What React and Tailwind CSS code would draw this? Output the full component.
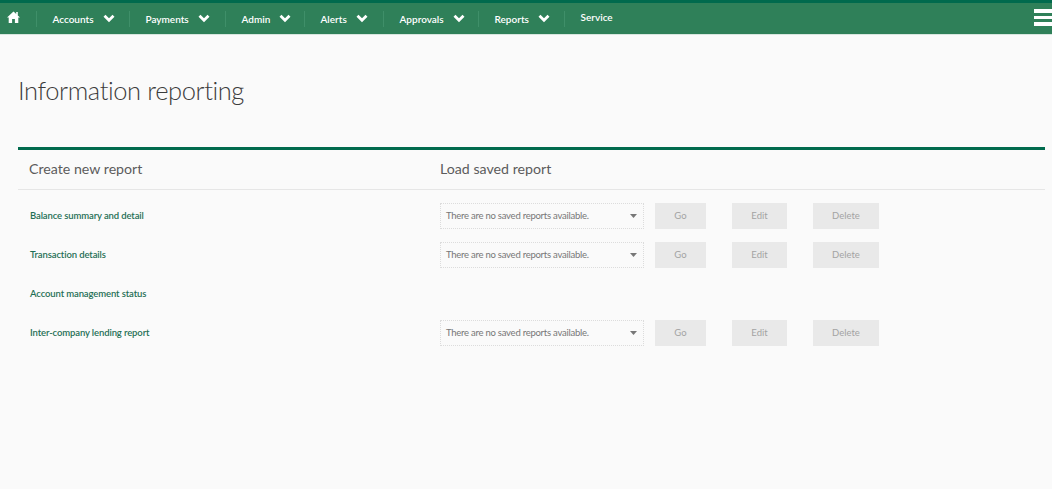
const NAV = [
  { label: "Accounts", cls: "w-[93px]" },
  { label: "Payments", cls: "w-[96px]" },
  { label: "Admin", cls: "w-[79px]" },
  { label: "Alerts", cls: "w-[79px]" },
  { label: "Approvals", cls: "w-[95px]" },
  { label: "Reports", cls: "w-[86px]" },
];

function Chevron() {
  return (
    <svg width="12" height="9" viewBox="0 0 12 9" fill="none" className="block">
      <path d="M1.5 1.8 L6 6.3 L10.5 1.8" stroke="#fff" strokeWidth="2.8" />
    </svg>
  );
}

function ReportRow({ name, saved = true }) {
  return (
    <div className="flex h-[39px] items-center">
      <div className="w-[422px] pl-[12px] pt-[1px] text-[9.5px] font-semibold tracking-[-0.12px] text-[#1f6f55]">{name}</div>
      {saved && (
        <div className="flex items-center text-[9.5px] text-[#a3a3a3]">
          <div className="flex h-[26px] w-[204px] items-center justify-between border border-dotted border-[#dcdcdc] pl-[5px] pr-[6px] tracking-[-0.25px] text-[#777777]">
            <span className="pt-[1px]">There are no saved reports available.</span>
            <svg width="7" height="4" viewBox="0 0 7 4"><path d="M0 0H7L3.5 4Z" fill="#777777" /></svg>
          </div>
          <div className="ml-[11px] flex h-[26px] w-[51px] items-center justify-center bg-[#e9e9e9] pt-[1px]">Go</div>
          <div className="ml-[26px] flex h-[26px] w-[55px] items-center justify-center bg-[#e9e9e9] pt-[1px]">Edit</div>
          <div className="ml-[26px] flex h-[26px] w-[66px] items-center justify-center bg-[#e9e9e9] pt-[1px]">Delete</div>
        </div>
      )}
    </div>
  );
}

export default function App() {
  return (
    <div className="h-[489px] w-[1052px] overflow-hidden bg-[#fafafa] font-['Lato',sans-serif]">
      <header className="flex h-[35px] items-center border-t-[3px] border-b border-t-[#006a4d] border-b-[#d8e6df] bg-[#2f8059] text-[10px] font-semibold text-white">
        <div className="flex w-[36px] justify-start pb-[3px] pl-[7px]">
          <svg width="13" height="12" viewBox="0 0 13 12" fill="#fff">
            <path d="M6.5 0.5 L9.2 3 V1 H10.8 V4.4 L13 6.5 H11.3 V12 H7.9 V8 H5.1 V12 H1.7 V6.5 H0 Z" />
          </svg>
        </div>
        {NAV.map((item) => (
          <div key={item.label} className={`flex h-[16px] items-center border-l border-[#3f8f69] pl-[15.5px] ${item.cls}`}>
            <span className="pt-[1px]">{item.label}</span>
            <span className="ml-[9px]"><Chevron /></span>
          </div>
        ))}
        <div className="flex h-[16px] items-center border-l border-[#3f8f69] pb-[2px] pl-[15.5px]">Service</div>
        <div className="ml-auto flex w-[18px] flex-col gap-[3px] self-start pt-[6px]">
          <span className="h-[3.5px] bg-white" />
          <span className="h-[3.5px] bg-white" />
          <span className="h-[3.5px] bg-white" />
        </div>
      </header>

      <main className="pl-[18px] pr-[7px]">
        <h1 className="pt-[37px] text-[25.5px] leading-[36px] font-light tracking-[-0.4px] text-[#3c3c3c]">Information reporting</h1>
        <section className="mt-[39px] border-t-[3px] border-[#006a4d]">
          <div className="flex h-[40px] items-center border-b border-[#e6e6e6] pb-[2px] text-[14.2px] text-[#5c5c5c]">
            <div className="w-[422px] pl-[11px]">Create new report</div>
            <div>Load saved report</div>
          </div>
          <div className="pt-[6px]">
            <ReportRow name="Balance summary and detail" />
            <ReportRow name="Transaction details" />
            <ReportRow name="Account management status" saved={false} />
            <ReportRow name="Inter-company lending report" />
          </div>
        </section>
      </main>
    </div>
  );
}
